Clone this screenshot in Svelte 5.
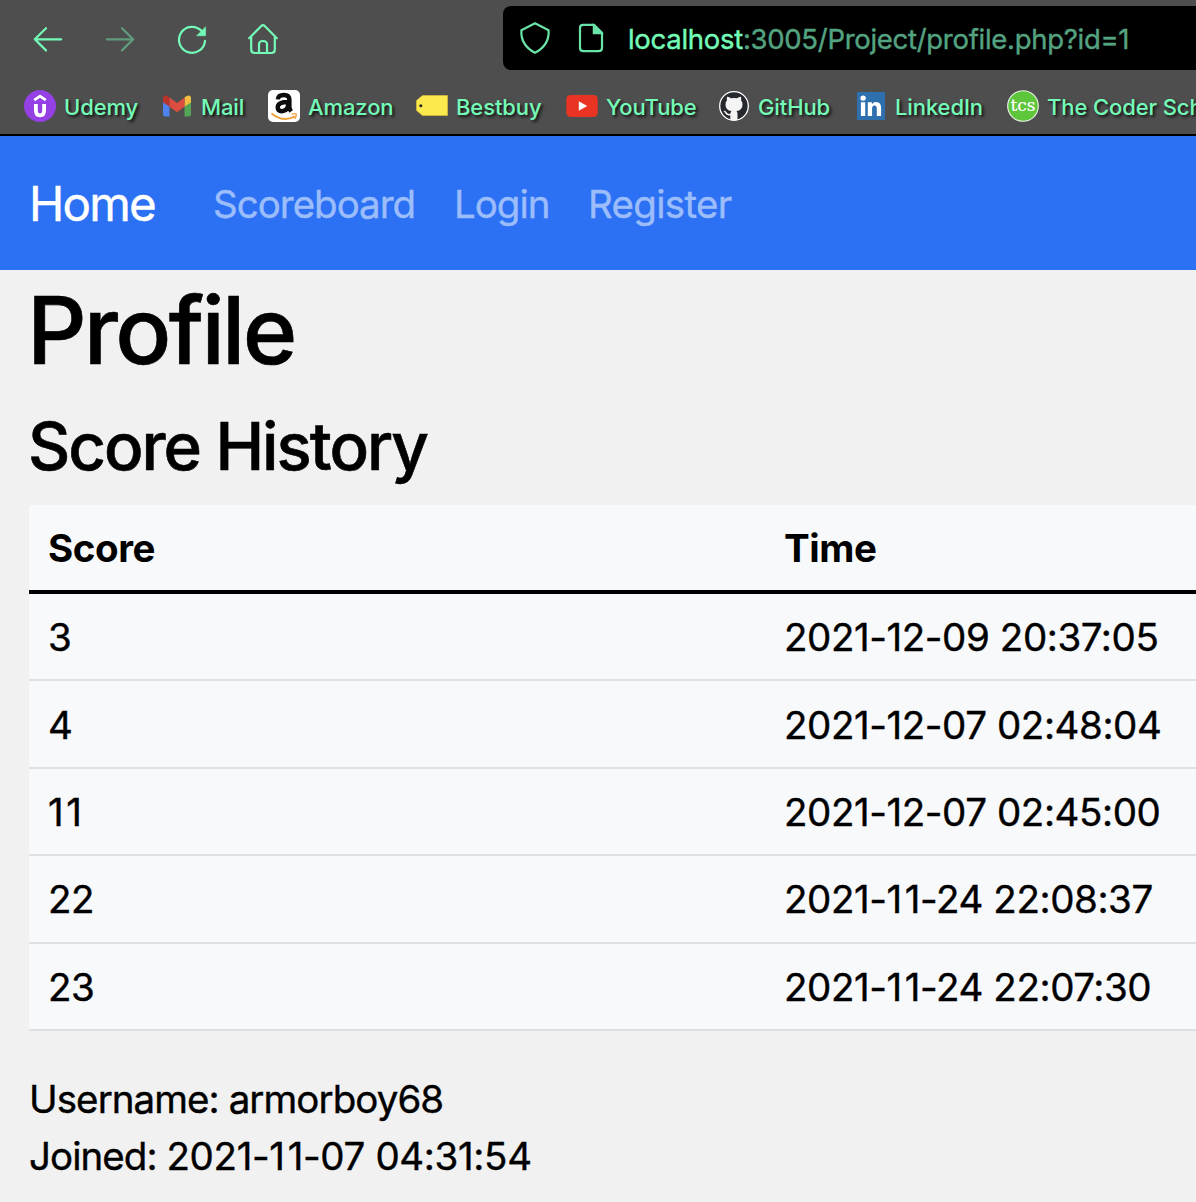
<script>
  const bookmarks = ['Udemy', 'Mail', 'Amazon', 'Bestbuy', 'YouTube', 'GitHub', 'LinkedIn', 'The Coder School'];

  const scores = [
    { score: '3', time: '2021-12-09 20:37:05' },
    { score: '4', time: '2021-12-07 02:48:04' },
    { score: '11', time: '2021-12-07 02:45:00' },
    { score: '22', time: '2021-11-24 22:08:37' },
    { score: '23', time: '2021-11-24 22:07:30' },
  ];
</script>

<!-- Opens up the tight kerning between two consecutive ones -->
{#snippet digits(value)}{#each value.split('11') as part, i}{#if i > 0}<i>1</i>1{/if}{part}{/each}{/snippet}

<div class="window">
  <header class="chrome">
    <div class="toolbar">
      <div class="buttons">
        <svg class="tool" viewBox="0 0 32 32"><path d="M29.2 16.3H3M14 5.2L2.8 16.3L14 27.4" /></svg>
        <svg class="tool dim" viewBox="0 0 32 32"><path d="M2.8 16.3H29M18 5.2L29.2 16.3L18 27.4" /></svg>
        <svg class="tool" viewBox="0 0 32 32">
          <path d="M25.6 8A13 13 0 1 0 29 17.8" />
          <path class="solid" d="M29.6 4V12.8H20.8Z" />
        </svg>
        <svg class="tool" viewBox="0 0 32 32">
          <path d="M1.2 15.2L13.3 3Q15 1.3 16.7 3L28.8 15.2" />
          <path d="M3.2 14V26.5Q3.2 30 6.7 30H23.3Q26.8 30 26.8 26.5V14" />
          <path d="M11 30V21.5Q11 18 15 18Q19 18 19 21.5V30" />
        </svg>
      </div>
      <div class="address">
        <svg class="field" viewBox="0 0 32 34">
          <path d="M16 2.2L29.6 9.2Q30.6 24 16 31.8Q1.4 24 2.4 9.2Z" />
        </svg>
        <svg class="field" viewBox="0 0 32 34">
          <path d="M7.5 3.8H19L27 11.8V26.7Q27 30.2 23.5 30.2H8.5Q5 30.2 5 26.7V7Q5 3.8 8 3.8Z" />
          <path class="solid" d="M18 3V13H28Z" />
        </svg>
        <span class="url"><b>localhost</b>:3005/Project/profile.php?id=1</span>
      </div>
    </div>

    <nav class="bookmarks">
      {#each bookmarks as name}
        <a class="bookmark" href="#{name}">
          <svg class="favicon" viewBox="0 0 32 32">
            {#if name === 'Udemy'}
              <circle cx="16" cy="16" r="16" fill="#9440e4" />
              <path d="M10.2 10.2L16 6.1L21.8 10.2" fill="none" stroke="#fff" stroke-width="2.7" />
              <path d="M11.9 14V20.5Q11.9 25.3 16 25.3Q20.1 25.3 20.1 20.5V14" fill="none" stroke="#fff" stroke-width="3.8" />
            {:else if name === 'Mail'}
              <path d="M2 10L8.5 14.5V26.5H4Q2 26.5 2 24.5Z" fill="#4d83eb" />
              <path d="M30 10L23.5 14.5V26.5H28Q30 26.5 30 24.5Z" fill="#54a557" />
              <path d="M2 13V8Q2 5.4 4.4 5.4Q5.6 5.4 6.4 6L8.5 7.5V16.8L2 12.2Z" fill="#b7352b" />
              <path d="M30 13V8Q30 5.4 27.6 5.4Q26.4 5.4 25.6 6L23.5 7.5V16.8L30 12.2Z" fill="#f3bd42" />
              <path d="M8.5 7.5L16 13L23.5 7.5V16.8L16 22.3L8.5 16.8Z" fill="#db4e3f" />
            {:else if name === 'Amazon'}
              <rect width="32" height="32" rx="5" fill="#fff" />
              <path d="M9.8 9.4Q10.2 5 16 5Q21.4 5 21.4 10V17Q21.4 19 23.2 21.4M20.9 12Q9.7 11.7 9.7 17.3Q9.7 21.2 13.8 21.2Q20.2 20.8 20.2 14" fill="none" stroke="#0c0c0c" stroke-width="4.4" />
              <path d="M3.5 23.5Q15.5 33 26.8 26.3" fill="none" stroke="#f0a33b" stroke-width="2" />
              <path d="M23.5 24.2Q28 23 28.3 24.2Q28.4 26.3 26.8 28.8" fill="none" stroke="#f0a33b" stroke-width="1.3" />
            {:else if name === 'Bestbuy'}
              <path d="M6.5 5.5H31.5V25.5H6.5L.5 20.5V10.5Z" fill="#fbe94e" stroke="#d4c03c" stroke-width=".7" />
              <circle cx="4.8" cy="15.7" r="1.5" fill="#222" />
            {:else if name === 'YouTube'}
              <rect x=".3" y="5" width="31.4" height="22" rx="4.2" fill="#e93323" />
              <path d="M12.8 11.2L21.2 16L12.8 20.8Z" fill="#fff" />
            {:else if name === 'GitHub'}
              <circle cx="16" cy="16" r="14.3" fill="#25292e" stroke="#fff" stroke-width="1.3" />
              <path d="M12.3 30V25.2Q8.5 26 7.2 23.3Q6.4 21.6 5.3 21.1Q7 20.3 8.5 22.2Q10 24.7 12.5 23.6Q12.6 22 13.5 21.1Q7.5 20.3 7.5 14.5Q7.5 11.8 9 10.3Q8.3 8.5 9.2 6.7Q11 6.5 13 8.3Q16 7.5 19 8.3Q21 6.5 22.8 6.7Q23.7 8.5 23 10.3Q24.5 11.8 24.5 14.5Q24.5 20.3 18.5 21.1Q19.5 22.2 19.5 24V30Q16 31.2 12.3 30Z" fill="#f4f4f4" />
            {:else if name === 'LinkedIn'}
              <rect x="2" y="2" width="28" height="28" fill="#2e70ad" />
              <circle cx="8.1" cy="8.1" r="2.7" fill="#fff" />
              <path d="M5.9 12.3H10.2V26H5.9ZM12.8 12.3H16.9V14.2Q18.2 12 21.1 12Q26.1 12 26.1 18V26H21.8V18.8Q21.8 15.6 19.5 15.6Q17.1 15.6 17.1 18.8V26H12.8Z" fill="#fff" />
            {:else}
              <circle cx="16" cy="16" r="15.3" fill="#5dc63b" stroke="#eef5ea" stroke-width="1.1" />
              <text class="tcs" x="16" y="20.8" text-anchor="middle" textLength="25" lengthAdjust="spacingAndGlyphs">tcs</text>
            {/if}
          </svg>
          <span>{name}</span>
        </a>
      {/each}
    </nav>
  </header>

  <nav class="navbar">
    <a class="brand" href="#home">Home</a>
    <a class="link scoreboard" href="#scoreboard">Scoreboard</a>
    <a class="link login" href="#login">Login</a>
    <a class="link register" href="#register">Register</a>
  </nav>

  <main>
    <h1>Profile</h1>
    <h2>Score History</h2>
    <div class="table">
      <div class="row head"><span>Score</span><span>Time</span></div>
      {#each scores as s}
        <div class="row"><span>{@render digits(s.score)}</span><span>{@render digits(s.time)}</span></div>
      {/each}
    </div>
    <div class="info">
      <div class="user">Username: armorboy68</div>
      <div class="joined"><span>{'Joined: '}</span>{@render digits('2021-11-07 04:31:54')}</div>
    </div>
  </main>
</div>

<style>
  :global(body) {
    margin: 0;
    overflow: hidden;
    background: #f1f1f1;
  }
  .window {
    width: 1196px;
    height: 1202px;
    overflow: hidden;
    box-sizing: border-box;
    font-family: Inter, sans-serif;
    font-size: 38.5px;
    color: #000;
    white-space: nowrap;
    -webkit-text-stroke: 0.4px currentColor;
  }
  a {
    color: inherit;
    text-decoration: none;
  }
  i {
    font-style: normal;
    letter-spacing: 2.6px;
  }
  .chrome {
    height: 136px;
    box-sizing: border-box;
    border-bottom: 2px solid #000;
    background: #4e4e4e;
    color: #74fbb8;
    overflow: hidden;
  }
  .toolbar {
    display: flex;
    padding-top: 6px;
  }
  .buttons {
    display: flex;
    align-items: center;
    gap: 40px;
    width: 471px;
    padding: 2px 0 0 32px;
  }
  svg {
    flex: none;
    display: block;
  }
  .tool,
  .field {
    width: 32px;
    height: 32px;
    fill: none;
    stroke: currentColor;
    stroke-width: 2.2;
    stroke-linecap: round;
    stroke-linejoin: round;
  }
  .field {
    height: 34px;
    color: #69e3a7;
  }
  .dim {
    opacity: 0.45;
  }
  .solid {
    fill: currentColor;
    stroke-width: 0.5;
  }
  .address {
    flex: 1;
    display: flex;
    align-items: center;
    gap: 24px;
    height: 64px;
    padding-left: 16px;
    border-radius: 8px 0 0 8px;
    background: #000;
  }
  .url {
    margin-left: -3px;
    padding-top: 2px;
    font-size: 27.5px;
    letter-spacing: -0.29px;
    color: #54a380;
  }
  .url b {
    font-weight: 400;
    color: #74fbb8;
  }
  .bookmarks {
    display: grid;
    grid-template-columns: 137px 107px 148px 150px 152px 137px 152px 300px;
    padding: 20px 0 0 24px;
  }
  .bookmark {
    display: flex;
    align-items: center;
    gap: 8px;
    font-size: 22px;
    font-weight: 500;
    letter-spacing: -0.1px;
    -webkit-text-stroke: 0;
  }
  .bookmark span {
    padding-top: 2px;
    text-shadow: 2px 2px 3px #111;
  }
  .favicon {
    width: 32px;
    height: 32px;
  }
  .tcs {
    font-family: 'DejaVu Serif', serif;
    font-size: 16px;
    fill: #fff;
    stroke: #fff;
    stroke-width: 0.2px;
    letter-spacing: 0;
  }
  .navbar {
    display: flex;
    align-items: center;
    box-sizing: border-box;
    height: 134px;
    padding: 2px 0 0 29px;
    background: #2c70f4;
    color: #fff;
  }
  .brand {
    width: 184px;
    padding-bottom: 2px;
    font-size: 47.5px;
    letter-spacing: -1.8px;
  }
  .link {
    color: #9bbdfb;
    letter-spacing: -1px;
  }
  .scoreboard {
    width: 241px;
  }
  .login {
    width: 134px;
  }
  .register {
    letter-spacing: -0.7px;
  }
  main {
    padding-left: 29px;
  }
  h1,
  h2 {
    margin: 0 0 0 -1px;
    font-weight: 500;
    -webkit-text-stroke: 0.6px currentColor;
  }
  h1 {
    height: 126px;
    margin-left: -2px;
    line-height: 121px;
    font-size: 93px;
    letter-spacing: -2.8px;
  }
  h2 {
    height: 109px;
    line-height: 102px;
    font-size: 65.5px;
    letter-spacing: -2.05px;
  }
  .table {
    background: #f8f9fb;
  }
  .row {
    display: grid;
    grid-template-columns: 736px 1fr;
    align-items: center;
    box-sizing: border-box;
    height: 87.4px;
    padding: 1px 0 0 19px;
    border-bottom: 2px solid #dee0e3;
    letter-spacing: -0.42px;
  }
  .head {
    height: 89px;
    border-bottom: 4px solid #000;
    font-weight: 700;
    padding-top: 0;
    -webkit-text-stroke: 0;
  }
  .info {
    padding-top: 40px;
    line-height: 57px;
  }
  .user {
    letter-spacing: -0.93px;
  }
  .joined {
    letter-spacing: -0.35px;
  }
  .joined span {
    letter-spacing: -0.95px;
  }
</style>
